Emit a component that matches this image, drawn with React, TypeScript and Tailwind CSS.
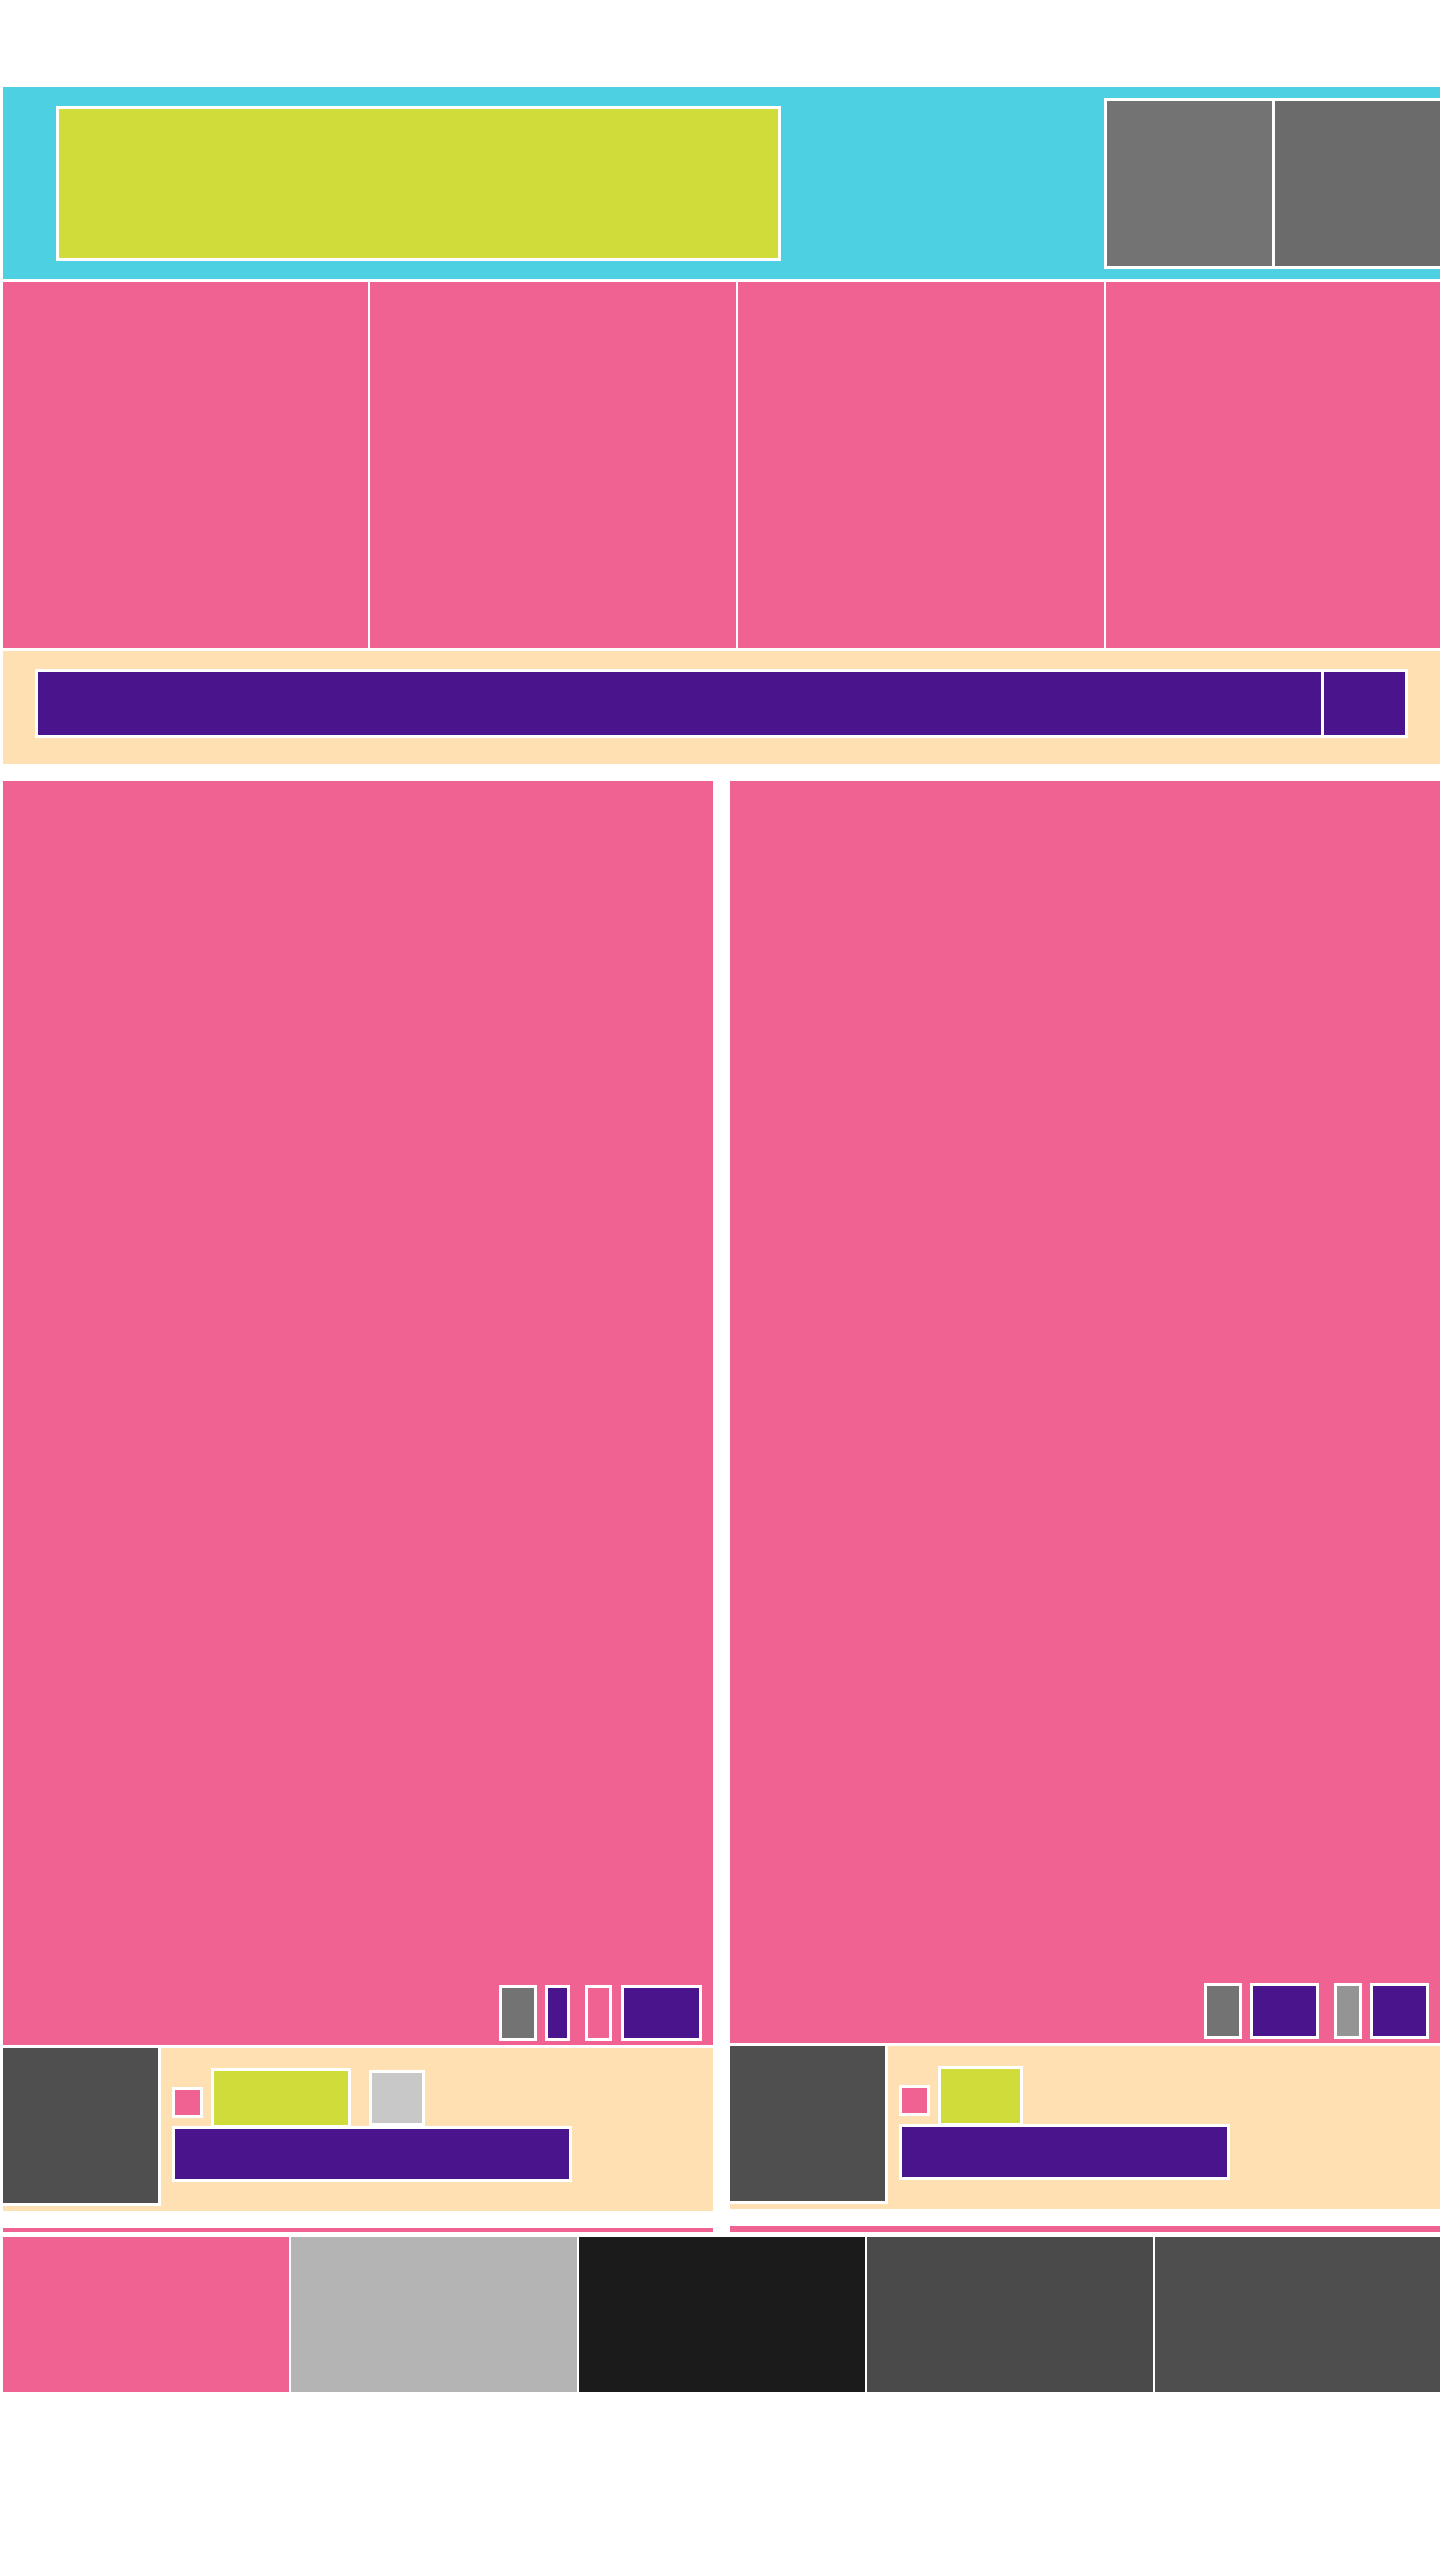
import React from 'react'

// colours taken from the reference
const box = 'border-[3px] border-white shrink-0'

const Controls = ({ items }: { items: { w: string; c: string; ml?: string }[] }) => (
    <div className="flex items-end h-[56px]">
        {items.map((it, i) => (
            <div key={i} className={`${box} h-[56px] ${it.w} ${it.c} ${it.ml ?? ''}`} />
        ))}
    </div>
)

const App = () => {
    return (
        <div className="w-[1440px] h-[2560px] overflow-hidden bg-white">
            <div className="w-[1437px] ml-[3px] pt-[87px]">
                {/* header */}
                <div className="h-[192px] bg-[#4dd0e1] flex items-start">
                    <div className={`${box} ml-[53px] mt-[19px] w-[725px] h-[155px] bg-[#cfdc3a]`} />
                    <div className="ml-auto mt-[11px] -mr-[3px] bg-white p-[3px] flex gap-[3px]">
                        <div className="w-[165px] h-[165px] bg-[#737373]" />
                        <div className="w-[165px] h-[165px] bg-[#6b6b6b]" />
                    </div>
                </div>

                {/* tiles */}
                <div className="mt-[3px] grid grid-cols-[365px_366px_366px_366px] gap-[2px] h-[366px]">
                    <div className="bg-[#f06292]" />
                    <div className="bg-[#f06292]" />
                    <div className="bg-[#f06292]" />
                    <div className="bg-[#f06292]" />
                </div>

                {/* search bar */}
                <div className="mt-[3px] h-[113px] bg-[#ffe0b2] pl-[32px] pt-[18px]">
                    <div className="w-[1373px] h-[69px] bg-white p-[3px] flex gap-[3px]">
                        <div className="flex-1 bg-[#4a148c]" />
                        <div className="w-[81px] bg-[#4a148c]" />
                    </div>
                </div>

                {/* cards */}
                <div className="mt-[17px] flex gap-[17px]">
                    <div className="w-[710px] flex flex-col">
                        <div className="h-[1264px] bg-[#f06292] flex items-end justify-end pr-[11px] pb-[4px]">
                            <Controls
                                items={[
                                    { w: 'w-[38px]', c: 'bg-[#737373]' },
                                    { w: 'w-[25px]', c: 'bg-[#4a148c]', ml: 'ml-[8px]' },
                                    { w: 'w-[27px]', c: 'bg-[#f06292]', ml: 'ml-[15px]' },
                                    { w: 'w-[81px]', c: 'bg-[#4a148c]', ml: 'ml-[9px]' },
                                ]}
                            />
                        </div>
                        <div className="mt-[3px] h-[163px] bg-[#ffe0b2] flex items-start">
                            <div className="w-[158px] h-[158px] bg-[#4f4f4f] border-r-[3px] border-b-[3px] border-white" />
                            <div className="pl-[11px] pt-[21px] flex flex-col">
                                <div className="flex items-center h-[57px]">
                                    <div className={`${box} w-[31px] h-[31px] bg-[#f06292] mt-[10px]`} />
                                    <div className={`${box} ml-[8px] w-[140px] h-[60px] bg-[#cfdc3a]`} />
                                    <div className={`${box} ml-[18px] w-[56px] h-[56px] bg-[#c8c8c8]`} />
                                </div>
                                <div className={`${box} w-[400px] h-[56px] bg-[#4a148c]`} />
                            </div>
                        </div>
                        <div className="mt-[17px] h-[4px] bg-[#f06292]" />
                    </div>

                    <div className="w-[710px] flex flex-col">
                        <div className="h-[1262px] bg-[#f06292] flex items-end justify-end pr-[11px] pb-[4px]">
                            <Controls
                                items={[
                                    { w: 'w-[38px]', c: 'bg-[#737373]' },
                                    { w: 'w-[69px]', c: 'bg-[#4a148c]', ml: 'ml-[8px]' },
                                    { w: 'w-[28px]', c: 'bg-[#949494]', ml: 'ml-[15px]' },
                                    { w: 'w-[59px]', c: 'bg-[#4a148c]', ml: 'ml-[8px]' },
                                ]}
                            />
                        </div>
                        <div className="mt-[3px] h-[163px] bg-[#ffe0b2] flex items-start">
                            <div className="w-[158px] h-[158px] bg-[#4f4f4f] border-r-[3px] border-b-[3px] border-white" />
                            <div className="pl-[11px] pt-[21px] flex flex-col">
                                <div className="flex items-center h-[57px]">
                                    <div className={`${box} w-[31px] h-[31px] bg-[#f06292] mt-[10px]`} />
                                    <div className={`${box} ml-[8px] w-[85px] h-[60px] bg-[#cfdc3a]`} />
                                </div>
                                <div className={`${box} w-[331px] h-[56px] bg-[#4a148c]`} />
                            </div>
                        </div>
                        <div className="mt-[17px] h-[6px] bg-[#f06292]" />
                    </div>
                </div>

                {/* footer strip */}
                <div className="mt-[5px] h-[155px] grid grid-cols-[286px_286px_286px_286px_286px] gap-[2px]">
                    <div className="bg-[#f06292]" />
                    <div className="bg-[#b4b4b4]" />
                    <div className="bg-[#1b1b1b]" />
                    <div className="bg-[#4a4a4a]" />
                    <div className="bg-[#4e4e4e]" />
                </div>
            </div>
        </div>
    )
}

export default App
